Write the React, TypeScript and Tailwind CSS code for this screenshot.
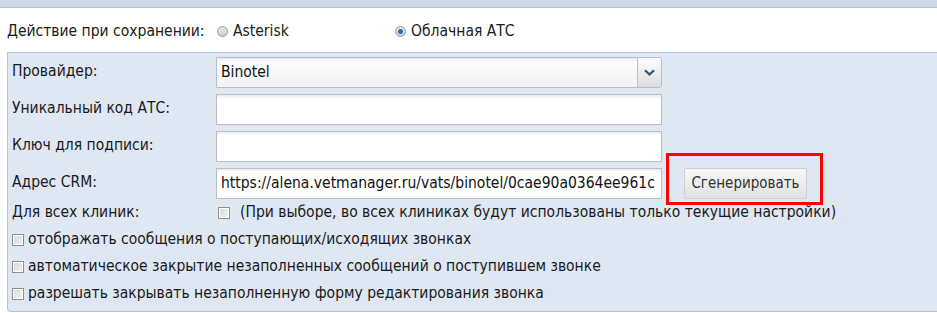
import React from 'react';

function Radio({ checked }: { checked?: boolean }) {
    return (
        <span className="inline-flex items-center justify-center w-[11px] h-[11px] rounded-full border border-[#9a9a9a] bg-gradient-to-b from-[#e8e8e8] to-[#cfcfcf]">
            {checked && <span className="w-[5px] h-[5px] rounded-full bg-[#2a6fb5]" />}
        </span>
    );
}

function Check() {
    return <span className="inline-block shrink-0 w-[12px] h-[12px] border border-[#8f8f8f] bg-gradient-to-br from-[#d8d8d8] to-[#f4f4f4] shadow-[inset_0_0_0_1px_#fff]" />;
}

const inputCls = "w-[446px] h-[31px] border border-[#b9bec9] bg-white shadow-[inset_0_3px_4px_-2px_rgba(0,0,0,0.12)] px-[4px] flex items-center overflow-hidden whitespace-nowrap text-[15.5px] text-[#111]";

function Row({ label, children }: { label: string; children: React.ReactNode }) {
    return (
        <div className="flex items-center h-[31px] mb-[6px]">
            <div className="w-[204px] shrink-0 -mt-[2px]">{label}</div>
            {children}
        </div>
    );
}

export default function App() {
    return (
        <div className="w-[937px] h-[313px] overflow-hidden bg-white text-[15.5px] text-[#1a1a1a]" style={{ fontFamily: '"DejaVu Sans Condensed", "DejaVu Sans", sans-serif' }}>
            <div className="h-[8px] bg-[#cfd9e6] border-b border-[#a9c4e4]" />
            <div className="h-[44px] flex items-center pl-[7px] pt-[3px]">
                <span className="w-[210px]">Действие при сохранении:</span>
                <label className="flex items-center gap-[5px] w-[178px]"><Radio /> Asterisk</label>
                <label className="flex items-center gap-[5px]"><Radio checked /> Облачная АТС</label>
            </div>
            <div className="ml-[7px] h-[260px] border-t border-l border-b border-[#a9c4e4] rounded-bl-[4px] bg-[#dfe7f3] pl-[4px] pt-[4px]">
                <Row label="Провайдер:">
                    <div className="w-[446px] h-[31px] flex border border-[#b9bec9] rounded-r-[3px] bg-gradient-to-b from-white to-[#f2f2f2] shadow-[inset_0_3px_4px_-2px_rgba(0,0,0,0.12)]">
                        <div className="flex-1 flex items-center px-[4px] text-[#111]">Binotel</div>
                        <div className="w-[24px] border-l border-[#b9bec9] rounded-r-[3px] bg-gradient-to-b from-white to-[#dcdcdc] flex items-center justify-center">
                            <svg width="11" height="7" viewBox="0 0 11 7"><path d="M1 1.2 L5.5 5.5 L10 1.2" fill="none" stroke="#34527c" strokeWidth="2.2" /></svg>
                        </div>
                    </div>
                </Row>
                <Row label="Уникальный код АТС:"><div className={inputCls} /></Row>
                <Row label="Ключ для подписи:"><div className={inputCls} /></Row>
                <Row label="Адрес CRM:">
                    <div className={inputCls}>https://alena.vetmanager.ru/vats/binotel/0cae90a0364ee961c</div>
                    <div className="relative ml-[22px]">
                        <button className="w-[123px] h-[31px] border border-[#d0d0d0] rounded-[2px] bg-gradient-to-b from-[#f8f8f8] to-[#e1e1e1] text-[15px] text-[#333]">Сгенерировать</button>
                        <div className="absolute left-[-18px] top-[-15px] w-[157px] h-[52px] border-[3px] border-[#ff0000]" />
                    </div>
                </Row>
                <div className="flex items-center h-[26px] -mt-[5px]">
                    <div className="w-[206px] shrink-0">Для всех клиник:</div>
                    <Check />
                    <span className="ml-[10px]">(При выборе, во всех клиниках будут использованы только текущие настройки)</span>
                </div>
                <div className="flex items-center h-[27px] gap-[4px]"><Check /> отображать сообщения о поступающих/исходящих звонках</div>
                <div className="flex items-center h-[27px] gap-[4px]"><Check /> автоматическое закрытие незаполненных сообщений о поступившем звонке</div>
                <div className="flex items-center h-[27px] gap-[4px]"><Check /> разрешать закрывать незаполненную форму редактирования звонка</div>
            </div>
        </div>
    );
}
